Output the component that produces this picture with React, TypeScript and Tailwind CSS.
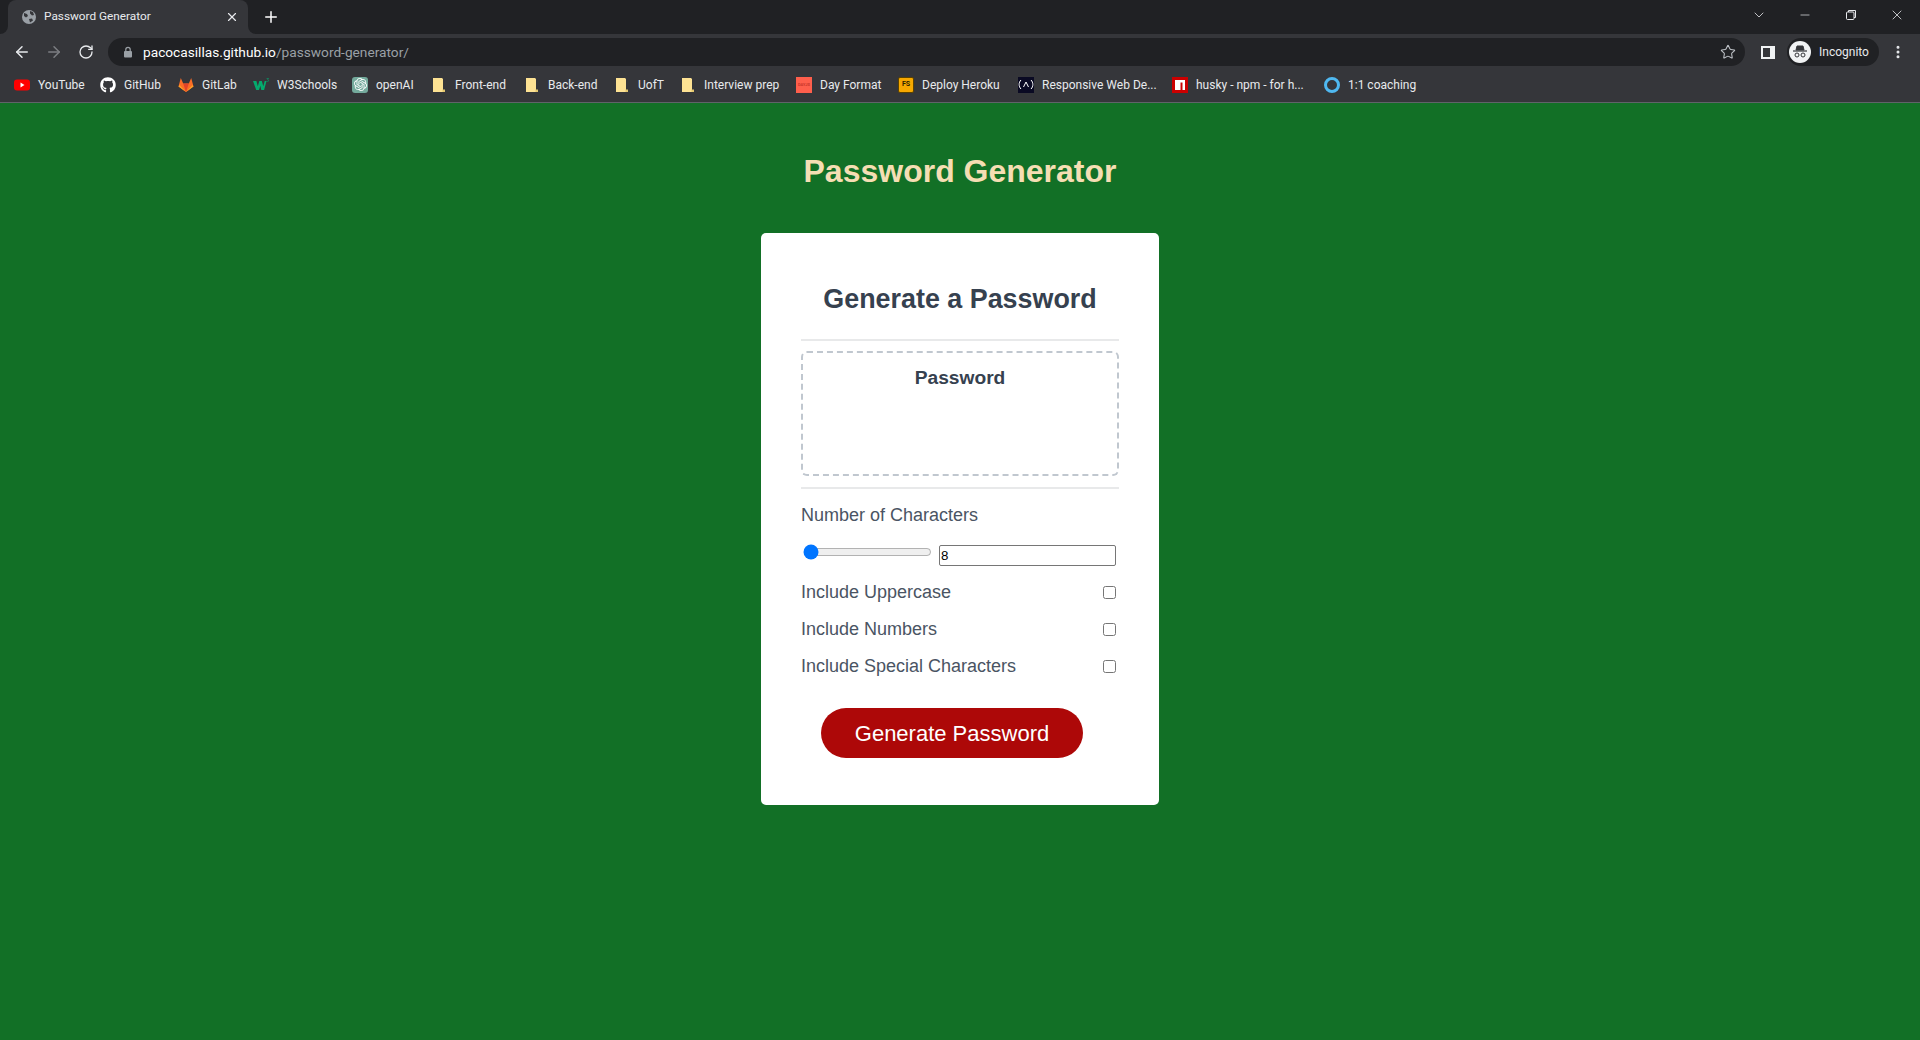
import React from 'react';
import { ArrowLeft, ArrowRight, RotateCw, Star, Plus, X, ChevronDown, Minus, EllipsisVertical } from 'lucide-react';
import { FaGithub } from 'react-icons/fa';
import { SiOpenai } from 'react-icons/si';

const FolderIcon = () => (
    <svg width="16" height="16" viewBox="0 0 16 16">
        <path d="M2 1h9.500v1H12v11h2v2H2z" fill="#fde293" />
        <path d="M11.500 1v11.500h2.500V15h-2.500z" fill="#e3c76e" />
    </svg>
);

const bookmarks: { label: string; width: string; icon: React.ReactNode }[] = [
    {
        label: 'YouTube',
        width: 'w-[46px]',
        icon: (
            <svg width="16" height="16" viewBox="0 0 16 16">
                <rect x="0" y="2.500" width="16" height="11" rx="3" fill="#f00" />
                <path d="M6.500 5.500 10.500 8l-4 2.500z" fill="#fff" />
            </svg>
        ),
    },
    { label: 'GitHub', width: 'w-[38px]', icon: <FaGithub size={16} color="#fff" /> },
    {
        label: 'GitLab',
        width: 'w-[35px]',
        icon: (
            <svg width="16" height="16" viewBox="0 0 16 16">
                <path d="M8 15 .5 9.500 2.800 1l2.400 5.500h5.600L13.200 1l2.300 8.500z" fill="#fc6d26" />
                <path d="M8 15 5.200 6.500h5.600z" fill="#e24329" />
                <path d="M8 15 .5 9.500l1-1.500zM8 15l7.500-5.500-1-1.500z" fill="#fca326" />
            </svg>
        ),
    },
    {
        label: 'W3Schools',
        width: 'w-[59px]',
        icon: (
            <svg width="16" height="16" viewBox="0 0 16 16">
                <path d="M0 4h3.400l1.400 5.200L6.300 4h2.500l1.500 5.200L11.700 4h1.800l-2.400 9H8.300L7.300 8.800 6 13H3.200z" fill="#04aa6d" />
                <path d="M13.600 1.500h2l-1 1.300c.7 0 1 .4 1 .9 0 .8-1 1.100-2 .7" fill="none" stroke="#04aa6d" strokeWidth=".6" />
            </svg>
        ),
    },
    {
        label: 'openAI',
        width: 'w-[39px]',
        icon: (
            <span className="w-4 h-4 rounded-[3px] bg-[#74aa9c] flex items-center justify-center">
                <SiOpenai size={13} color="#fff" />
            </span>
        ),
    },
    { label: 'Front-end', width: 'w-[53px]', icon: <FolderIcon /> },
    { label: 'Back-end', width: 'w-[50px]', icon: <FolderIcon /> },
    { label: 'UofT', width: 'w-[26px]', icon: <FolderIcon /> },
    { label: 'Interview prep', width: 'w-[76px]', icon: <FolderIcon /> },
    {
        label: 'Day Format',
        width: 'w-[62px]',
        icon: (
            <span className="w-4 h-4 bg-[#ff5f4c] flex items-center justify-center text-[4px] font-bold text-[#c9352a]">
                DAYJS
            </span>
        ),
    },
    {
        label: 'Deploy Heroku',
        width: 'w-[80px]',
        icon: (
            <span className="w-4 h-4 rounded-[2px] bg-[#f7a800] border border-[#5c4300] flex items-center justify-center text-[7px] font-bold text-[#2b2000]">
                FS
            </span>
        ),
    },
    {
        label: 'Responsive Web De...',
        width: 'w-[114px]',
        icon: (
            <span className="w-4 h-4 bg-[#0a0a23] flex items-center justify-center">
                <svg width="16" height="11" viewBox="0 0 16 11" fill="none" stroke="#fff" strokeWidth="1">
                    <path d="M3 1C.5 3.500.5 7.500 3 10M13 1c2.500 2.500 2.500 6.500 0 9" />
                    <path d="M5.500 8 8 3l2.500 5" />
                </svg>
            </span>
        ),
    },
    {
        label: 'husky - npm - for h...',
        width: 'w-[112px]',
        icon: (
            <svg width="16" height="16" viewBox="0 0 16 16">
                <rect width="16" height="16" fill="#c00" />
                <path d="M3 3h10v10h-2.500V5.500H8.500V13H3z" fill="#fff" />
            </svg>
        ),
    },
    {
        label: '1:1 coaching',
        width: 'w-[66px]',
        icon: <span className="w-4 h-4 rounded-full border-[3px] border-[#4fb8f0]" />,
    },
];

const options = ['Include Uppercase', 'Include Numbers', 'Include Special Characters'];

const BrowserChrome: React.FC = () => (
    <div className="font-['Roboto',sans-serif] text-white">
        {/* tab strip */}
        <div className="h-[34px] bg-[#202124] flex items-end">
            <div className="w-2 h-2 bg-[#35363a]">
                <div className="w-full h-full bg-[#202124] rounded-br-lg" />
            </div>
            <div className="w-[240px] h-[34px] bg-[#35363a] rounded-t-lg flex items-center pl-[13px] pr-[9px]">
                <svg width="16" height="16" viewBox="0 0 16 16">
                    <circle cx="8" cy="8" r="7" fill="#9aa0a6" />
                    <path d="M3 4l3 1 1 2-2 1.500L3 7zM9 2l3 1 1 3-2 .5-2-2zM8 10l3-.5 1 2-3 2z" fill="#35363a" />
                </svg>
                <span className="ml-[7px] text-[11.800px] text-[#e8eaed] flex-1">Password Generator</span>
                <X size={14} strokeWidth={2} color="#e8eaed" />
            </div>
            <div className="w-2 h-2 bg-[#35363a]">
                <div className="w-full h-full bg-[#202124] rounded-bl-lg" />
            </div>
            <div className="h-[34px] flex items-center ml-[6px]">
                <Plus size={18} strokeWidth={2} color="#fff" />
            </div>
            <div className="ml-auto h-[34px] flex items-start pt-[7px] text-[#e8eaed]">
                <ChevronDown size={16} strokeWidth={1.200} className="mr-[31px]" />
                <Minus size={14} strokeWidth={1.200} className="mr-[33px] mt-[1px]" />
                <svg width="12" height="12" viewBox="0 0 12 12" fill="none" stroke="currentColor" className="mr-[32px] mt-[2px]">
                    <rect x="1.500" y="3" width="7.500" height="7.500" rx="1" />
                    <path d="M3.500 3V1.500h7V8.500H9" />
                </svg>
                <X size={16} strokeWidth={1.200} className="mr-[15px]" />
            </div>
        </div>

        {/* toolbar */}
        <div className="h-[34px] bg-[#35363a] flex items-center pl-[13px] pt-[2px]">
            <ArrowLeft size={18} strokeWidth={2} color="#e8eaed" />
            <ArrowRight size={18} strokeWidth={2} color="#7c7e82" className="ml-[14px]" />
            <RotateCw size={16} strokeWidth={2} color="#e8eaed" className="ml-[15px]" />
            <div className="ml-[14px] w-[1637px] h-[28px] rounded-full bg-[#202124] flex items-center pl-[13px] pr-[9px]">
                <svg width="12" height="12" viewBox="0 0 12 12" className="ml-[1px]">
                    <rect x="2" y="5" width="8" height="6.500" rx="1" fill="#9aa0a6" />
                    <path d="M3.800 5V3.500a2.200 2.200 0 0 1 4.400 0V5" fill="none" stroke="#9aa0a6" strokeWidth="1.200" />
                </svg>
                <span className="ml-[9px] text-[13.700px] text-white">
                    pacocasillas.github.io<span className="text-[#9aa0a6]">/password-generator/</span>
                </span>
                <Star size={16} strokeWidth={1.600} color="#bdc1c6" className="ml-auto" />
            </div>
            <div className="ml-[16px] w-[14px] h-[13px] bg-[#f1f3f4] flex justify-start">
                <span className="w-[7px] h-[9px] mt-[2px] ml-[2px] bg-[#35363a]" />
            </div>
            <div className="ml-[12px] w-[92px] h-[28px] rounded-full bg-[#202124] flex items-center pl-[2px]">
                <span className="w-[22px] h-[22px] rounded-full bg-[#f1f3f4] flex items-center justify-center">
                    <svg width="16" height="14" viewBox="0 0 16 14" fill="none" stroke="#35363a">
                        <path d="M4 5l1-4h6l1 4z" fill="#35363a" />
                        <path d="M1 6h14" strokeWidth="1.200" />
                        <circle cx="5" cy="10" r="2" />
                        <circle cx="11" cy="10" r="2" />
                    </svg>
                </span>
                <span className="ml-[8px] text-[12px] text-[#e8eaed]">Incognito</span>
            </div>
            <EllipsisVertical size={16} strokeWidth={2.500} color="#e8eaed" className="ml-[11px]" />
        </div>

        {/* bookmarks bar */}
        <div className="h-[35px] bg-[#35363a] border-b border-[#5f6368] flex items-center pl-[14px] pb-[1px] gap-[16px]">
            {bookmarks.map((b) => (
                <div key={b.label} className="flex items-center gap-[8px]">
                    <span className="w-4 h-4 flex items-center justify-center">{b.icon}</span>
                    <span className={`${b.width} text-[12px] leading-4 whitespace-nowrap text-[#e8eaed]`}>{b.label}</span>
                </div>
            ))}
        </div>
    </div>
);

export default function App() {
    return (
        <div className="h-[1040px] overflow-hidden flex flex-col bg-[#127026]">
            <BrowserChrome />
            <main className="flex-1 flex flex-col items-center font-['Liberation_Sans',Arial,sans-serif]">
                <h1 className="mt-[48px] h-[40px] leading-[40px] text-[32px] font-bold text-[#f5deb3]">Password Generator</h1>
                <div className="mt-[42px] w-[398px] h-[572px] bg-white rounded-[5px] px-[40px] pt-[48px]">
                    <h2 className="h-[36px] leading-[36px] text-center text-[26.880px] font-bold text-[#36414f]">Generate a Password</h2>
                    <div className="mt-[22px] h-[2px] bg-[#e8e9ea]" />
                    <div className="mt-[10px] h-[125px] border-2 border-dashed border-[#c0c7cf] rounded-[6px] pt-[13px] text-center text-[19.200px] leading-6 font-bold text-[#36414f]">
                        Password
                    </div>
                    <div className="mt-[11px] h-[2px] bg-[#e8e9ea]" />

                    <div className="mt-[14px] h-[24px] leading-6 text-[18px] text-[#4a5463]">Number of Characters</div>
                    <div className="mt-[16px] flex items-start">
                        <input type="range" min={8} max={128} defaultValue={8} className="w-[129px] h-[16px] mx-[2px] mt-[1px] [appearance:auto] [accent-color:#0075ff]" />
                        <input
                            type="text"
                            defaultValue="8"
                            readOnly
                            className="ml-[5px] mt-[2px] w-[177px] h-[21px] border border-[#767676] rounded-[2px] px-[1px] text-[13.333px] text-black"
                        />
                    </div>

                    <div className="mt-[14px] flex flex-col gap-[13px]">
                        {options.map((label) => (
                            <label key={label} className="h-[24px] flex items-center justify-between text-[18px] leading-6 text-[#4a5463]">
                                {label}
                                <input type="checkbox" className="mr-[3px] w-[13px] h-[13px] [appearance:auto]" />
                            </label>
                        ))}
                    </div>

                    <button className="mt-[30px] ml-[20px] w-[262px] h-[50px] rounded-full bg-[#ad0808] text-white text-[22px]">
                        Generate Password
                    </button>
                </div>
            </main>
        </div>
    );
}
